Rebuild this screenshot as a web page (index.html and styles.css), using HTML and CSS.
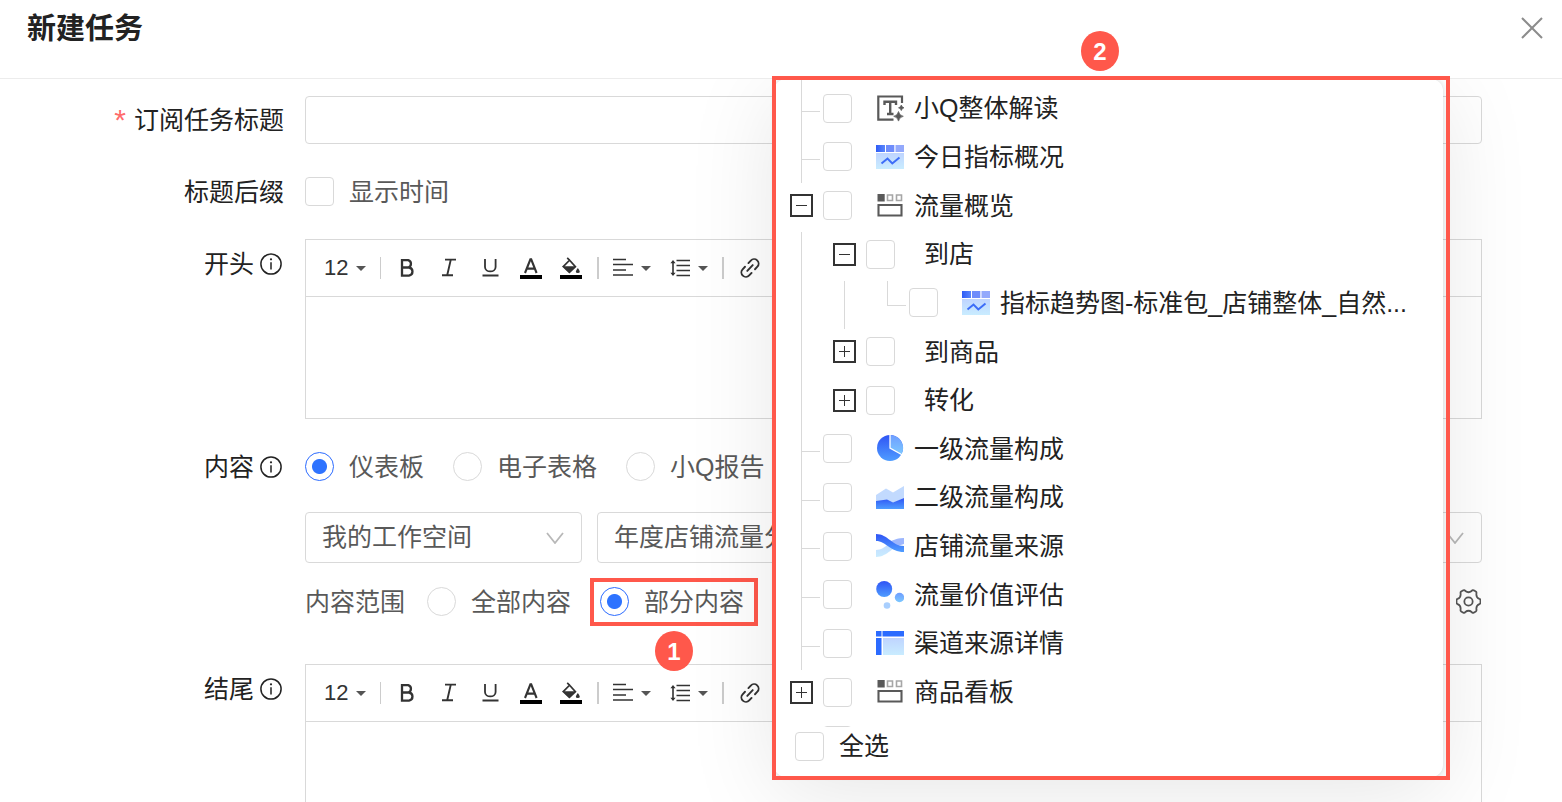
FILE: index.html
```html
<!DOCTYPE html>
<html lang="zh-CN">
<head>
<meta charset="utf-8">
<title>新建任务</title>
<link rel="stylesheet" href="styles.css">
</head>
<body>
<svg class="defs" aria-hidden="true">
  <defs>
    <linearGradient id="g-deep" x1="0" y1="0" x2="0" y2="1"><stop offset="0" stop-color="#2f54f5"/><stop offset="1" stop-color="#4f9dff"/></linearGradient>
    <linearGradient id="g-side" x1="0" y1="0" x2="1" y2="0"><stop offset="0" stop-color="#2f5cf6"/><stop offset="1" stop-color="#5a86fb"/></linearGradient>
    <linearGradient id="g-light" x1="0" y1="0" x2="0" y2="1"><stop offset="0" stop-color="#6e9dff"/><stop offset="1" stop-color="#7cc8ff"/></linearGradient>
    <linearGradient id="g-pale" x1="0" y1="0" x2="0" y2="1"><stop offset="0" stop-color="#bfd4ff"/><stop offset="1" stop-color="#c9ecff"/></linearGradient>
    <symbol id="i-info" viewBox="0 0 22 22"><circle cx="11" cy="11" r="10.1" fill="none" stroke="#222" stroke-width="1.5"/><circle cx="11" cy="6.3" r="1.1" fill="#222"/><path d="M11 9.2v7.3" stroke="#222" stroke-width="1.5"/></symbol>
    <symbol id="i-caret" viewBox="0 0 10 5"><path d="M0 0h10L5 5z" fill="#555"/></symbol>
    <symbol id="i-bold" viewBox="0 0 24 24"><path d="M7 4.200h6.200a3.800 3.800 0 0 1 0 7.300H7zM7 11.500h7a4.100 4.100 0 0 1 0 8.100H7z" fill="none" stroke="#333" stroke-width="2.300"/></symbol>
    <symbol id="i-italic" viewBox="0 0 24 24"><path d="M9 3.600h11M6 19.200h11M14.800 3.600l-3.600 15.600" fill="none" stroke="#333" stroke-width="1.900"/></symbol>
    <symbol id="i-under" viewBox="0 0 24 24"><path d="M8 3v7.900c0 6 10.600 6 10.600 0V3M5.500 19.500h16" fill="none" stroke="#333" stroke-width="1.800"/></symbol>
    <symbol id="i-color" viewBox="0 0 24 24"><path d="M7 17l5.400-13.600h.8L18.600 17M9 12.600h7.600" fill="none" stroke="#333" stroke-width="2.100"/><path d="M2 19h22v4H2z"/></symbol>
    <symbol id="i-fill" viewBox="0 0 24 24"><path d="M8.200 1.800l3 3M4.200 10.600l6.400-6.400 5.800 6.400-6 5.800z" fill="none" stroke="#333" stroke-width="1.700"/><path d="M3.600 10.300h13.400l-6.600 6.600z" fill="#333"/><path d="M18.800 12q4 5 0 5t0-5" fill="#333"/><path d="M1 19h22v4H1z"/></symbol>
    <symbol id="i-align" viewBox="0 0 20 20"><path d="M0 1.500h13M0 6.500h20M0 12h13M0 17h20" stroke="#333" stroke-width="1.700"/></symbol>
    <symbol id="i-line" viewBox="0 0 20 20"><path d="M6.500 2.500h13.500M6.500 7.500h13.500M6.500 12.500h13.500M6.500 17.500h13.500M3 4v13" stroke="#333" stroke-width="1.600"/><path d="M.4 5.300L3 2l2.600 3.300zM.4 14.700L3 18l2.600-3.300z" fill="#333"/></symbol>
    <symbol id="i-link" viewBox="0 0 24 24"><g transform="rotate(-47 12 12)" fill="none" stroke="#333" stroke-width="1.900" stroke-linecap="round"><path d="M9.500 7.500H6a4.500 4.500 0 0 0 0 9h3.500M14.500 7.500H18a4.500 4.500 0 0 1 0 9h-3.500M8 12h8"/></g></symbol>
    <symbol id="i-down" viewBox="0 0 18 12"><path d="M1 1l8 10 8-10" fill="none" stroke="#b8b8b8" stroke-width="1.800"/></symbol>
    <symbol id="i-gear" viewBox="0 0 24 24"><path d="M7 1.300Q8.200.7 9 1.900 12 4.300 15 1.900q.8-1.200 2-.6l2 1.200q.9.600.6 1.800-.5 4 2.900 5.200 1 .3 1 1.300v2.400q0 1-1 1.300-3.400 1.200-2.900 5.200.3 1.200-.6 1.800l-2 1.200q-1.200.6-2-.6-3-2.400-6 0-.8 1.200-2 .6l-2-1.200q-.9-.6-.6-1.800.5-4-2.900-5.200-1-.3-1-1.300v-2.400q0-1 1-1.300Q4.900 8.300 4.400 4.300 4.100 3.100 5 2.500z" fill="none" stroke="#555" stroke-width="1.700"/><circle cx="12" cy="12" r="4" fill="none" stroke="#555" stroke-width="1.700"/></symbol>
    <symbol id="i-text" viewBox="0 0 28 28"><path d="M26 9V2.500H2.300v23.200h15.200" fill="none" stroke="#595959" stroke-width="2.200"/><path d="M8.500 11V7.700h11.500V11M14.200 7.700v12M11 20h6.500" fill="none" stroke="#595959" stroke-width="2.400"/><path d="M22.500 17.500q.8 4 4.800 4.800-4 .8-4.800 4.800-.8-4-4.800-4.800 4-.8 4.800-4.800zM25.300 11q.5 2.300 2.700 2.800-2.200.5-2.700 2.800-.5-2.300-2.800-2.800 2.300-.5 2.800-2.800z" fill="#595959" stroke="#595959" stroke-width=".7"/></symbol>
    <symbol id="i-kpi" viewBox="0 0 28 28"><path d="M0 2h9v7H0z" fill="url(#g-side)"/><path d="M10 2h8.300v7H10z" fill="#6e8cfb"/><path d="M19.500 2H28v7h-8.500z" fill="#93a9fc"/><path d="M0 10h28v16H0z" fill="url(#g-pale)"/><path d="M5.500 20.500l6-5 4.800 5 7.200-6" fill="none" stroke="#3d6df8" stroke-width="2"/></symbol>
    <symbol id="i-tab" viewBox="0 0 28 28"><path d="M1.500 2h7.200v7.500H1.500z" fill="#595959"/><path d="M11.500 3h5v5.500h-5zM20.500 3h5v5.500h-5z" fill="none" stroke="#a6a6a6" stroke-width="1.600"/><path d="M2.500 13h23v10.500h-23z" fill="none" stroke="#595959" stroke-width="2.100"/></symbol>
    <symbol id="i-pie" viewBox="0 0 28 28"><circle cx="14" cy="13" r="13" fill="url(#g-deep)"/><path d="M14 13V0a13 13 0 0 1 11.300 19.500z" fill="url(#g-light)"/><path d="M14 0v13l12 6.800" fill="none" stroke="#fff" stroke-width="1.300"/></symbol>
    <symbol id="i-area" viewBox="0 0 28 28"><path d="M0 12L10 5.500l7 4L28 3v12L17 20H0z" fill="#c2dafe"/><path d="M0 18l11-1.500 6 3L28 15v11H0z" fill="url(#g-deep)"/></symbol>
    <symbol id="i-flow" viewBox="0 0 28 28"><path d="M0 18c10 0 15-12 28-12v6C17 13 12 25 0 25z" fill="url(#g-pale)"/><path d="M15 9q6-3 13-3v6l-7 2z" fill="#9db6fd"/><path d="M0 2c12 0 16 12 28 12v6C14 20 10 9 0 9z" fill="url(#g-deep)"/></symbol>
    <symbol id="i-bubble" viewBox="0 0 28 28"><circle cx="8.200" cy="8" r="8" fill="url(#g-deep)"/><circle cx="23.500" cy="16.500" r="4.700" fill="url(#g-light)"/><circle cx="11" cy="24.500" r="3.300" fill="#a9cffe"/></symbol>
    <symbol id="i-table" viewBox="0 0 28 28"><path d="M0 2h5.500v5.500H0zM6.500 2H28v5.500H6.500zM0 9h5.500v17H0z" fill="#2b6bff"/><path d="M7 9h21v17H7z" fill="url(#g-pale)"/></symbol>
  </defs>
</svg>

<div class="drawer">
  <header class="drawer-header">
    <h1 class="drawer-title">新建任务</h1>
    <button class="icon-button" type="button" aria-label="关闭"><svg class="icon-close" viewBox="0 0 22 22"><path d="M1 1l20 20M21 1L1 21" stroke="#8c8c8c" stroke-width="2"/></svg></button>
  </header>

  <main class="drawer-body">
    <form class="form">
      <label class="form-label" for="task-title"><span class="required">*</span>订阅任务标题</label>
      <input class="text-input" id="task-title" type="text">

      <span class="form-label">标题后缀</span>
      <div class="choice-row"><label class="choice"><input class="checkbox" type="checkbox">显示时间</label></div>

      <label class="form-label editor-label" for="intro">开头<svg class="icon-info"><use href="#i-info"/></svg></label>
      <div class="editor">
        <div class="toolbar">
          <button class="tool" type="button">12<svg class="caret"><use href="#i-caret"/></svg></button>
          <span class="divider"></span>
          <div class="tool-group">
            <button class="tool" type="button" aria-label="加粗"><svg class="icon-tool"><use href="#i-bold"/></svg></button>
            <button class="tool" type="button" aria-label="斜体"><svg class="icon-tool"><use href="#i-italic"/></svg></button>
            <button class="tool" type="button" aria-label="下划线"><svg class="icon-tool"><use href="#i-under"/></svg></button>
            <button class="tool" type="button" aria-label="文字颜色"><svg class="icon-tool"><use href="#i-color"/></svg></button>
            <button class="tool" type="button" aria-label="背景颜色"><svg class="icon-tool"><use href="#i-fill"/></svg></button>
          </div>
          <span class="divider divider-bold"></span>
          <div class="tool-group para-group">
            <button class="tool" type="button" aria-label="对齐"><svg class="icon-para"><use href="#i-align"/></svg><svg class="caret"><use href="#i-caret"/></svg></button>
            <button class="tool" type="button" aria-label="行高"><svg class="icon-para"><use href="#i-line"/></svg><svg class="caret"><use href="#i-caret"/></svg></button>
          </div>
          <span class="divider divider-bold"></span>
          <button class="tool" type="button" aria-label="链接"><svg class="icon-tool"><use href="#i-link"/></svg></button>
        </div>
        <textarea class="editor-text" id="intro"></textarea>
      </div>

      <span class="form-label">内容<svg class="icon-info"><use href="#i-info"/></svg></span>
      <div class="content-field">
        <div class="choice-row">
          <label class="choice"><input class="radio" type="radio" name="source" checked>仪表板</label>
          <label class="choice"><input class="radio" type="radio" name="source">电子表格</label>
          <label class="choice"><input class="radio" type="radio" name="source">小Q报告</label>
        </div>
        <div class="select-row">
          <div class="select-box select-space"><select class="select" aria-label="工作空间"><option>我的工作空间</option></select><svg class="icon-down"><use href="#i-down"/></svg></div>
          <div class="select-box select-board"><select class="select" aria-label="仪表板"><option>年度店铺流量分析</option></select><svg class="icon-down"><use href="#i-down"/></svg></div>
        </div>
        <div class="choice-row">
          <span class="range-label">内容范围</span>
          <label class="choice"><input class="radio" type="radio" name="range">全部内容</label>
          <label class="choice choice-marked"><input class="radio" type="radio" name="range" checked>部分内容<span class="mark mark-choice"></span><span class="badge badge-one">1</span></label>
          <button class="icon-button settings" type="button" aria-label="设置"><svg class="icon-gear"><use href="#i-gear"/></svg></button>
        </div>
      </div>

      <label class="form-label editor-label" for="ending">结尾<svg class="icon-info"><use href="#i-info"/></svg></label>
      <div class="editor">
        <div class="toolbar">
          <button class="tool" type="button">12<svg class="caret"><use href="#i-caret"/></svg></button>
          <span class="divider"></span>
          <div class="tool-group">
            <button class="tool" type="button" aria-label="加粗"><svg class="icon-tool"><use href="#i-bold"/></svg></button>
            <button class="tool" type="button" aria-label="斜体"><svg class="icon-tool"><use href="#i-italic"/></svg></button>
            <button class="tool" type="button" aria-label="下划线"><svg class="icon-tool"><use href="#i-under"/></svg></button>
            <button class="tool" type="button" aria-label="文字颜色"><svg class="icon-tool"><use href="#i-color"/></svg></button>
            <button class="tool" type="button" aria-label="背景颜色"><svg class="icon-tool"><use href="#i-fill"/></svg></button>
          </div>
          <span class="divider divider-bold"></span>
          <div class="tool-group para-group">
            <button class="tool" type="button" aria-label="对齐"><svg class="icon-para"><use href="#i-align"/></svg><svg class="caret"><use href="#i-caret"/></svg></button>
            <button class="tool" type="button" aria-label="行高"><svg class="icon-para"><use href="#i-line"/></svg><svg class="caret"><use href="#i-caret"/></svg></button>
          </div>
          <span class="divider divider-bold"></span>
          <button class="tool" type="button" aria-label="链接"><svg class="icon-tool"><use href="#i-link"/></svg></button>
        </div>
        <textarea class="editor-text" id="ending"></textarea>
      </div>
    </form>

    <section class="popup">
      <div class="tree-view">
        <ul class="tree">
          <li class="node"><span class="unit guide branch guide-up"></span><label class="node-label"><input class="checkbox" type="checkbox"><svg class="node-icon"><use href="#i-text"/></svg>小Q整体解读</label></li>
          <li class="node"><span class="unit guide branch"></span><label class="node-label"><input class="checkbox" type="checkbox"><svg class="node-icon"><use href="#i-kpi"/></svg>今日指标概况</label></li>
          <li class="node"><button class="unit switcher" type="button" aria-label="收起"></button><label class="node-label"><input class="checkbox" type="checkbox"><svg class="node-icon"><use href="#i-tab"/></svg>流量概览</label></li>
          <li class="node"><span class="unit guide"></span><button class="unit switcher" type="button" aria-label="收起"></button><label class="node-label node-plain"><input class="checkbox" type="checkbox">到店</label></li>
          <li class="node"><span class="unit guide"></span><span class="unit guide"></span><span class="unit guide branch guide-end"></span><label class="node-label"><input class="checkbox" type="checkbox"><svg class="node-icon"><use href="#i-kpi"/></svg>指标趋势图-标准包_店铺整体_自然...</label></li>
          <li class="node"><span class="unit guide"></span><button class="unit switcher closed" type="button" aria-label="展开"></button><label class="node-label node-plain"><input class="checkbox" type="checkbox">到商品</label></li>
          <li class="node"><span class="unit guide"></span><button class="unit switcher closed" type="button" aria-label="展开"></button><label class="node-label node-plain"><input class="checkbox" type="checkbox">转化</label></li>
          <li class="node"><span class="unit guide branch"></span><label class="node-label"><input class="checkbox" type="checkbox"><svg class="node-icon"><use href="#i-pie"/></svg>一级流量构成</label></li>
          <li class="node"><span class="unit guide branch"></span><label class="node-label"><input class="checkbox" type="checkbox"><svg class="node-icon"><use href="#i-area"/></svg>二级流量构成</label></li>
          <li class="node"><span class="unit guide branch"></span><label class="node-label"><input class="checkbox" type="checkbox"><svg class="node-icon"><use href="#i-flow"/></svg>店铺流量来源</label></li>
          <li class="node"><span class="unit guide branch"></span><label class="node-label"><input class="checkbox" type="checkbox"><svg class="node-icon"><use href="#i-bubble"/></svg>流量价值评估</label></li>
          <li class="node"><span class="unit guide branch"></span><label class="node-label"><input class="checkbox" type="checkbox"><svg class="node-icon"><use href="#i-table"/></svg>渠道来源详情</label></li>
          <li class="node"><button class="unit switcher closed" type="button" aria-label="展开"></button><label class="node-label"><input class="checkbox" type="checkbox"><svg class="node-icon"><use href="#i-tab"/></svg>商品看板</label></li>
          <li class="node"><span class="unit"></span><label class="node-label"><input class="checkbox" type="checkbox"></label></li>
        </ul>
      </div>
      <footer class="popup-footer"><label class="choice"><input class="checkbox" type="checkbox">全选</label></footer>
    </section>
  </main>

  <div class="mark mark-popup"><span class="badge badge-two">2</span></div>
</div>
</body>
</html>
```

FILE: styles.css
```css
* {
  box-sizing: border-box;
}

body {
  margin: 0;
  background: #fff;
  color: #222;
  font: 25px/48px "Liberation Sans", "Noto Sans CJK SC", sans-serif;
}

button,
input,
select,
textarea {
  margin: 0;
  font: inherit;
  color: inherit;
}

svg {
  display: block;
  flex: none;
}

.defs {
  position: absolute;
  width: 0;
  height: 0;
}

.drawer {
  position: relative;
  display: flex;
  flex-direction: column;
  height: 100vh;
  overflow: hidden;
}

.drawer-header {
  display: flex;
  justify-content: space-between;
  align-items: flex-start;
  padding: 4px 19px 26px 27px;
  border-bottom: 1px solid #ececec;
}

.drawer-title {
  margin: 0;
  font-size: 29px;
  line-height: 44px;
  font-weight: 700;
  font-family: "Noto Sans CJK SC", sans-serif;
}

.icon-button {
  display: flex;
  align-items: center;
  height: 48px;
  padding: 0;
  border: 0;
  background: none;
}

.icon-close {
  width: 22px;
  height: 22px;
}

.drawer-body {
  position: relative;
  flex: 1;
  min-height: 0;
  overflow: hidden;
}

.form {
  display: grid;
  grid-template-columns: 284px 1fr;
  gap: 24px 21px;
  padding: 17px 80px 0 0;
}

.form-label {
  display: flex;
  justify-content: flex-end;
  align-items: center;
  align-self: start;
  gap: 6px;
  height: 47px;
}

.editor-label {
  height: 50px;
}

.required {
  margin-right: 2px;
  color: #ff6b6b;
  font-size: 30px;
}

.icon-info {
  width: 22px;
  height: 22px;
  margin-right: 2px;
}

.text-input {
  width: 100%;
  height: 48px;
  padding: 0 16px;
  border: 1px solid #d9d9d9;
  border-radius: 4px;
  background: #fff;
}

.choice-row {
  display: flex;
  align-items: center;
  gap: 29px;
  height: 47px;
  color: #595959;
}

.choice {
  display: flex;
  align-items: center;
  gap: 15px;
}

.checkbox,
.radio {
  appearance: none;
  flex: none;
  width: 29px;
  height: 29px;
  border: 1px solid #d9d9d9;
  border-radius: 4px;
  background: #fff;
}

.radio {
  border-radius: 50%;
}

.radio:checked {
  border-color: #2b6bff;
  background: radial-gradient(circle, #2e73ff 7px, #fff 8px);
}

.editor {
  border: 1px solid #d9d9d9;
}

.toolbar {
  display: flex;
  align-items: center;
  gap: 14px;
  height: 57px;
  padding-left: 18px;
  border-bottom: 1px solid #d9d9d9;
}

.tool-group {
  display: flex;
  gap: 17px;
}

.para-group {
  gap: 19px;
}

.tool {
  display: flex;
  align-items: center;
  gap: 8px;
  height: 24px;
  padding: 0;
  border: 0;
  background: none;
  color: #333;
  font-size: 22px;
  line-height: 24px;
}

.icon-tool {
  width: 24px;
  height: 24px;
}

.icon-para {
  width: 20px;
  height: 20px;
}

.caret {
  width: 10px;
  height: 5px;
}

.divider {
  width: 1px;
  height: 22px;
  background: #ccc;
}

.divider-bold {
  width: 2px;
}

.editor-text {
  display: block;
  width: 100%;
  height: 121px;
  padding: 8px 16px;
  border: 0;
  background: #fff;
  resize: none;
}

.content-field {
  padding-bottom: 15px;
}

.select-row {
  display: flex;
  gap: 15px;
  padding: 22px 0 15px;
}

.select-box {
  display: flex;
  align-items: center;
  height: 51px;
  border: 1px solid #d9d9d9;
  border-radius: 4px;
  color: #595959;
}

.select-space {
  width: 277px;
}

.select-board {
  flex: 1;
}

.select {
  appearance: none;
  flex: 1;
  min-width: 0;
  height: 49px;
  padding: 0 0 2px 16px;
  border: 0;
  background: none;
}

.icon-down {
  width: 18px;
  height: 12px;
  margin-right: 17px;
}

.range-label {
  margin-right: -7px;
}

.choice-marked {
  position: relative;
}

.settings {
  margin-left: auto;
  margin-right: 1px;
}

.icon-gear {
  width: 25px;
  height: 25px;
}

.mark {
  position: absolute;
  border: 4px solid #ff584b;
  pointer-events: none;
}

.mark-choice {
  inset: 0 -14px 0 -10px;
}

.mark-popup {
  inset: 76px 112px 22px 772px;
}

.badge {
  position: absolute;
  width: 38px;
  height: 40px;
  border-radius: 50%;
  background: #ff584b;
  color: #fff;
  font-size: 24px;
  line-height: 42px;
  font-weight: 700;
  text-align: center;
}

.badge-one {
  top: 53px;
  left: 55px;
}

.badge-two {
  top: -49px;
  left: 305px;
}

.popup {
  position: absolute;
  inset: 0 119px 25px 774px;
  display: flex;
  flex-direction: column;
  border-radius: 12px;
  background: #fff;
  box-shadow: 0 0 4px rgba(0, 0, 0, 0.12), 0 16px 90px rgba(0, 0, 0, 0.1);
}

.tree-view {
  flex: 1;
  min-height: 0;
  padding: 5px 0 0 16px;
  overflow: hidden;
}

.tree {
  display: grid;
  grid-template-rows: repeat(14, 1fr);
  height: 681px;
  margin: 0;
  padding: 0;
  list-style: none;
}

.node {
  display: flex;
  align-items: center;
  gap: 20px;
}

.unit {
  position: relative;
  flex: none;
  align-self: stretch;
  width: 23px;
}

.guide::before {
  content: "";
  position: absolute;
  top: 2px;
  bottom: -2px;
  left: 11px;
  border-left: 1px solid #d9d9d9;
}

.guide-up::before {
  top: -5px;
}

.guide-end::before {
  bottom: 22px;
}

.branch::after {
  content: "";
  position: absolute;
  bottom: 21px;
  left: 11px;
  width: 19px;
  border-top: 1px solid #d9d9d9;
}

.switcher {
  align-self: center;
  height: 23px;
  padding: 0;
  border: 2px solid #333;
  background: linear-gradient(#333, #333) center / 11px 1px no-repeat;
}

.closed {
  background: linear-gradient(#333, #333) center / 11px 1px no-repeat, linear-gradient(#333, #333) center / 1px 11px no-repeat;
}

.node-label {
  display: flex;
  align-items: center;
  gap: 10px;
  margin-left: -10px;
  white-space: nowrap;
}

.node-icon {
  width: 28px;
  height: 28px;
  margin-left: 14px;
}

.node-plain {
  gap: 29px;
}

.popup-footer {
  display: flex;
  height: 50px;
  padding: 0 21px 12px;
}
```
